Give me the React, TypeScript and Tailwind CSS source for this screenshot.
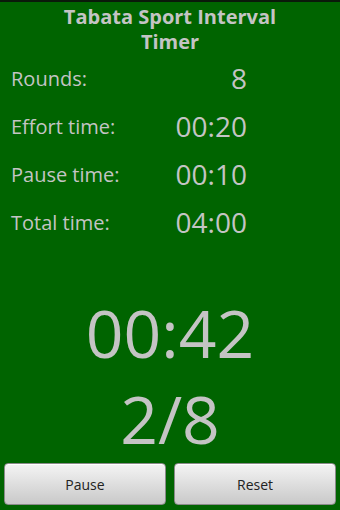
import React from 'react';

const rows = [
  { label: 'Rounds:', value: '8' },
  { label: 'Effort time:', value: '00:20' },
  { label: 'Pause time:', value: '00:10' },
  { label: 'Total time:', value: '04:00' },
];

const font = { fontFamily: '"Open Sans", "DejaVu Sans", sans-serif' };

const App: React.FC = () => {
  return (
    <div
      className="w-[340px] h-[510px] bg-[#006400] border-t-2 border-[#0a1a0a] flex flex-col text-[#c4c4c4] overflow-hidden"
      style={font}
    >
      {/* Title */}
      <h1 className="text-center font-bold text-[20px] leading-[25px] pt-[2px] h-[52px]">
        Tabata Sport Interval
        <br />
        Timer
      </h1>

      {/* Settings table */}
      <div className="flex flex-col">
        {rows.map((r) => (
          <div key={r.label} className="flex items-center h-[48px]">
            <span className="w-[165px] pl-[11px] text-[20px] pt-[2px]">{r.label}</span>
            <span className="w-[82px] text-right text-[28px]">{r.value}</span>
          </div>
        ))}
      </div>

      {/* Running timer */}
      <div className="flex-1 flex flex-col items-center justify-end pb-[6px]">
        <div className="text-[66px] leading-[78px]">00:42</div>
        <div className="text-[66px] leading-[78px] mt-[8px]">2/8</div>
      </div>

      {/* Buttons */}
      <div className="flex gap-[8px] px-[4px] pb-[5px]">
        <Btn label="Pause" />
        <Btn label="Reset" />
      </div>
    </div>
  );
};

const Btn: React.FC<{ label: string }> = ({ label }) => (
  <button
    className="flex-1 h-[42px] rounded-[4px] border border-[#8a8a8a] bg-gradient-to-b from-[#f4f4f4] to-[#c9c9c9] text-[#222] text-[14px] flex items-center justify-center shadow-[inset_0_1px_0_#fff]"
    style={font}
  >
    {label}
  </button>
);

export default App;
